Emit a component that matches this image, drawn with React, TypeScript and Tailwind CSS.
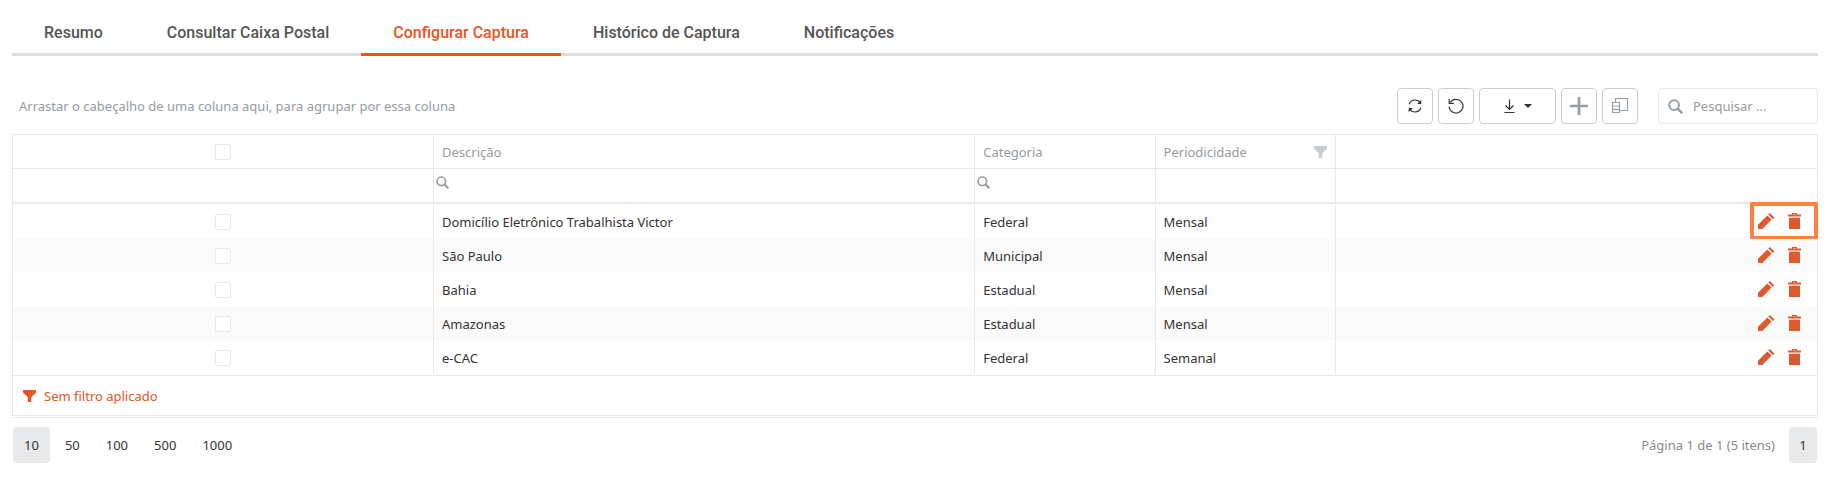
import React from "react";

const tabs = [
  "Resumo",
  "Consultar Caixa Postal",
  "Configurar Captura",
  "Histórico de Captura",
  "Notificações",
];

const rows = [
  { descricao: "Domicílio Eletrônico Trabalhista Victor", categoria: "Federal", periodicidade: "Mensal" },
  { descricao: "São Paulo", categoria: "Municipal", periodicidade: "Mensal" },
  { descricao: "Bahia", categoria: "Estadual", periodicidade: "Mensal" },
  { descricao: "Amazonas", categoria: "Estadual", periodicidade: "Mensal" },
  { descricao: "e-CAC", categoria: "Federal", periodicidade: "Semanal" },
];

const pageSizes = ["10", "50", "100", "500", "1000"];

const toolButton =
  "flex h-9 items-center justify-center rounded-[4px] border border-[#c8cfcf] bg-white text-[#333]";
const headCell = "h-[34px] border-r border-b border-[#e8e8e8] px-2 text-left font-normal";
const filterCell = "h-[35px] border-r border-b-2 border-[#e8e8e8] p-0 align-top";
const bodyCell = "h-[34px] border-t border-t-transparent border-r border-r-[#e8e8e8] bg-clip-padding px-2";

const SearchIcon = ({ className }: { className: string }) => (
  <svg viewBox="0 0 14 14" className={className} fill="none" stroke="currentColor">
    <circle cx="5.7" cy="5.7" r="4.6" strokeWidth="1.8" />
    <path d="M9 9l4.300 4.300" strokeWidth="2.300" />
  </svg>
);

const FunnelIcon = ({ className }: { className: string }) => (
  <svg viewBox="0 0 13 12" className={className} fill="currentColor">
    <path d="M0 0h13v2.6L8.2 7.2V12H4.8V7.2L0 2.6z" />
  </svg>
);

const PencilIcon = () => (
  <svg viewBox="0 0 17 16" className="h-4 w-[17px]" fill="currentColor">
    <path d="M0 16v-4.300L9.300 2.400l4.300 4.200L4.300 16z" />
    <path d="M10.300 1.500 11.800 0l4.600 4.500-1.500 1.400z" />
  </svg>
);

const TrashIcon = () => (
  <svg viewBox="0 0 13 16" className="h-4 w-[13px]" fill="currentColor">
    <path d="M0 1.500h4V0h5v1.500h4v2H0zM5.200 1.500h2.600V1H5.200z" fillRule="evenodd" />
    <path d="M1 4.700h11V16H1z" />
  </svg>
);

const CheckBox = ({ label }: { label: string }) => (
  <input
    type="checkbox"
    aria-label={label}
    className="mx-auto block size-4 appearance-none rounded-[2px] border border-[#e8e8e8] bg-white"
  />
);

const FilterInput = ({ label }: { label: string }) => (
  <label className="flex items-center pt-1 pl-[2px] text-[#979ea6]">
    <SearchIcon className="size-[13px] shrink-0" />
    <input type="text" aria-label={label} className="h-[18px] w-full min-w-0 px-2 outline-none" />
  </label>
);

const Tabs = () => (
  <nav className="flex h-11 font-[Roboto,sans-serif] text-base font-medium">
    {tabs.map((tab) => (
      <button
        key={tab}
        type="button"
        className={
          tab === "Configurar Captura"
            ? "border-b-3 border-[#ea5420] px-8 whitespace-nowrap text-[#ea5420]"
            : "border-b-3 border-[#dedede] px-8 whitespace-nowrap text-[#555]"
        }
      >
        {tab}
      </button>
    ))}
    <div className="flex-1 border-b-3 border-[#dedede]" />
  </nav>
);

const Toolbar = () => (
  <div className="mt-8 flex items-center gap-[5px]">
    <p className="flex-1 pl-[7px] text-[#959ba1]">
      Arrastar o cabeçalho de uma coluna aqui, para agrupar por essa coluna
    </p>
    <button type="button" aria-label="Atualizar" className={`${toolButton} w-9`}>
      <svg viewBox="0 0 16 16" className="size-4" fill="none" stroke="currentColor" strokeWidth="1.2">
        <path d="M2.200 6.200C3 3.600 5.300 2 8 2c2.200 0 4.200 1.200 5.300 3" />
        <path d="M13.800 9.800C13 12.400 10.700 14 8 14c-2.200 0-4.200-1.200-5.300-3" />
        <path d="M14.300 1.800v4.200h-4.200zM1.700 14.200V10h4.200z" fill="currentColor" stroke="none" />
      </svg>
    </button>
    <button type="button" aria-label="Restaurar" className={`${toolButton} w-9`}>
      <svg viewBox="0 0 16 16" className="size-4" fill="none" stroke="currentColor" strokeWidth="1.2">
        <path d="M2.300 4.400A6.900 6.900 0 1 1 1.200 8.800" />
        <path d="M1.200 1v4.300h4.600" />
      </svg>
    </button>
    <button type="button" aria-label="Exportar" className={`${toolButton} w-[77px] gap-2`}>
      <svg viewBox="0 0 12 16" className="h-4 w-3" fill="none" stroke="currentColor" strokeWidth="1.2">
        <path d="M5.500 1.500v10M1.500 7.500l4 4 4-4M.500 14.500h10" />
      </svg>
      <svg viewBox="0 0 8 4" className="h-1 w-2" fill="currentColor">
        <path d="M0 0h8L4 4z" />
      </svg>
    </button>
    <button type="button" aria-label="Adicionar" className={`${toolButton} w-9`}>
      <svg viewBox="0 0 18 18" className="size-[18px] text-[#979ea6]" fill="currentColor">
        <path d="M7.600 0h2.800v7.800H18v2.400h-7.600V18H7.600v-7.800H0V7.800h7.600z" />
      </svg>
    </button>
    <button type="button" aria-label="Selecionar colunas" className={`${toolButton} w-9`}>
      <svg viewBox="0 0 18 16" className="h-4 w-[18px] text-[#979ea6]" fill="none" stroke="currentColor" strokeWidth="1.2">
        <path d="M4.500 4V.500h12v12h-8M1.500 4.500h7v10h-7zM1.500 8h7M1.500 11.300h7" />
      </svg>
    </button>
    <label className="ml-[15px] flex h-9 w-40 items-center gap-[10px] rounded-[4px] border border-[#e8e8e8] px-[9px]">
      <SearchIcon className="size-[15px] shrink-0 text-[#979ea6]" />
      <input
        type="text"
        aria-label="Pesquisar"
        placeholder="Pesquisar ..."
        className="w-full min-w-0 outline-none placeholder:text-[#999]"
      />
    </label>
  </div>
);

const Grid = () => (
  <div className="mt-[10px] border border-[#e8e8e8]">
    <table className="mb-px w-full table-fixed border-separate border-spacing-0">
      <colgroup>
        <col className="w-[421px]" />
        <col className="w-[30%]" />
        <col className="w-[10%]" />
        <col className="w-[10%]" />
        <col />
      </colgroup>
      <thead className="text-[#959ba1]">
        <tr>
          <th className={headCell}>
            <CheckBox label="Selecionar todos" />
          </th>
          <th className={headCell}>Descrição</th>
          <th className={headCell}>Categoria</th>
          <th className={headCell}>
            <div className="flex items-center justify-between">
              Periodicidade
              <FunnelIcon className="h-3 w-[13px] text-[#c9cccf]" />
            </div>
          </th>
          <th className={`${headCell} border-r-0`} />
        </tr>
        <tr>
          <td className={filterCell} />
          <td className={filterCell}>
            <FilterInput label="Filtrar descrição" />
          </td>
          <td className={filterCell}>
            <FilterInput label="Filtrar categoria" />
          </td>
          <td className={filterCell} />
          <td className={`${filterCell} border-r-0`} />
        </tr>
      </thead>
      <tbody className="text-[#333]">
        {rows.map((row, index) => (
          <tr key={row.descricao} className="even:[&>td]:bg-[#fafafa]">
            <td className={bodyCell}>
              <CheckBox label={`Selecionar ${row.descricao}`} />
            </td>
            <td className={bodyCell}>{row.descricao}</td>
            <td className={bodyCell}>{row.categoria}</td>
            <td className={bodyCell}>{row.periodicidade}</td>
            <td className={`${bodyCell} relative border-r-0`}>
              <div className="flex items-center justify-end gap-[13px] pr-2 pb-[2px] text-[#dd5a30]">
                <button type="button" aria-label="Editar">
                  <PencilIcon />
                </button>
                <button type="button" aria-label="Excluir">
                  <TrashIcon />
                </button>
              </div>
              {/* highlight over the first row actions */}
              {index === 0 && (
                <div className="pointer-events-none absolute -top-[3px] -right-px h-[38px] w-[68px] rounded-[2px] border-4 border-[#ff8142]" />
              )}
            </td>
          </tr>
        ))}
      </tbody>
    </table>
    <div className="flex h-10 items-center border-t border-[#e8e8e8] pl-[10px] text-[#ea5420]">
      <button type="button" className="flex items-center gap-2">
        <FunnelIcon className="h-3 w-[13px]" />
        Sem filtro aplicado
      </button>
    </div>
  </div>
);

const Pager = () => (
  <div className="mt-px flex items-center justify-between border-t border-[#e8e8e8] px-px pt-[9px] text-[#333]">
    <div className="flex gap-1">
      {pageSizes.map((size) => (
        <button
          key={size}
          type="button"
          className={size === "10" ? "h-9 rounded-[4px] bg-[#e8e9eb] px-[11px]" : "h-9 rounded-[4px] px-[11px]"}
        >
          {size}
        </button>
      ))}
    </div>
    <div className="flex items-center gap-[14px]">
      <span className="text-[#8a8a8a]">Página 1 de 1 (5 itens)</span>
      <button type="button" className="h-9 w-7 rounded-[4px] bg-[#e8e9eb]">
        1
      </button>
    </div>
  </div>
);

const App = () => {
  return (
    <main className="bg-white pt-3 pr-2 pl-3 font-['Noto_Sans',sans-serif] text-[13px] leading-5">
      <Tabs />
      <Toolbar />
      <Grid />
      <Pager />
    </main>
  );
};

export default App;
